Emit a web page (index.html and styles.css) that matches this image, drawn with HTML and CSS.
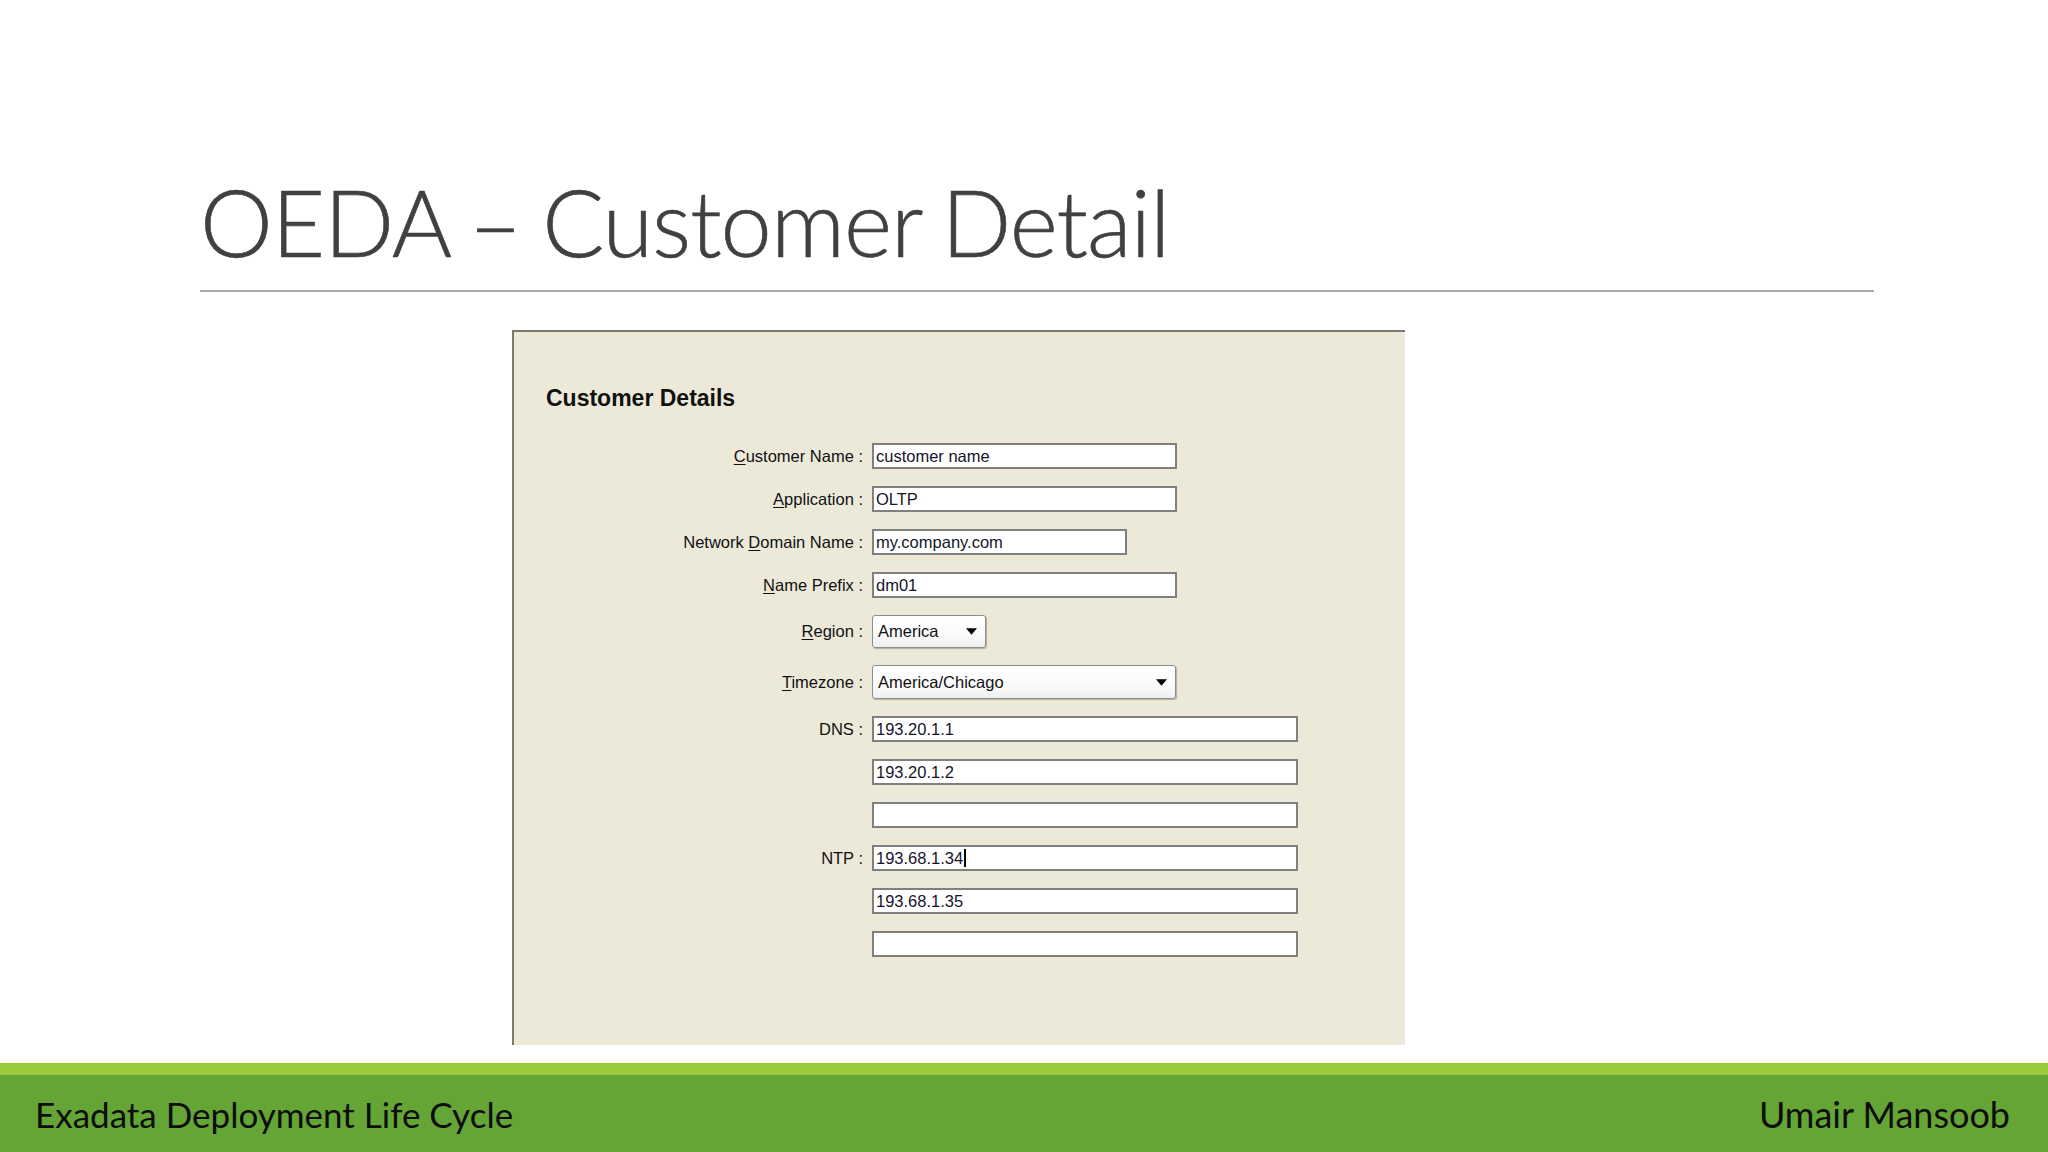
FILE: index.html
```html
<!DOCTYPE html>
<html lang="en">
<head>
<meta charset="utf-8">
<title>OEDA – Customer Detail</title>
<link rel="stylesheet" href="styles.css">
</head>
<body>
<div class="slide">
  <header class="head">
    <h1 class="title">OEDA – Customer Detail</h1>
  </header>
  <div class="rule"></div>
  <main class="content">
    <section class="panel">
      <h2 class="panel-title">Customer Details</h2>
      <div class="form">
        <label class="lbl"><u>C</u>ustomer Name :</label>
        <div class="field w305">customer name</div>

        <label class="lbl"><u>A</u>pplication :</label>
        <div class="field w305">OLTP</div>

        <label class="lbl">Network <u>D</u>omain Name :</label>
        <div class="field w255">my.company.com</div>

        <label class="lbl"><u>N</u>ame Prefix :</label>
        <div class="field w305">dm01</div>

        <label class="lbl"><u>R</u>egion :</label>
        <div class="combo w114"><span>America</span><svg class="arrow" viewBox="0 0 10 6" width="11" height="7"><path d="M0 0H10L5 6Z" fill="#000"/></svg></div>

        <label class="lbl"><u>T</u>imezone :</label>
        <div class="combo w304"><span>America/Chicago</span><svg class="arrow" viewBox="0 0 10 6" width="11" height="7"><path d="M0 0H10L5 6Z" fill="#000"/></svg></div>

        <label class="lbl">DNS :</label>
        <div class="field w426">193.20.1.1</div>

        <span class="lbl"></span>
        <div class="field w426">193.20.1.2</div>

        <span class="lbl"></span>
        <div class="field w426"></div>

        <label class="lbl">NTP :</label>
        <div class="field w426"><span class="caret">193.68.1.34</span></div>

        <span class="lbl"></span>
        <div class="field w426">193.68.1.35</div>

        <span class="lbl"></span>
        <div class="field w426"></div>
      </div>
    </section>
  </main>
  <footer class="footer">
    <span class="foot-text">Exadata Deployment Life Cycle</span>
    <span class="foot-text foot-right">Umair Mansoob</span>
  </footer>
</div>
</body>
</html>
```
FILE: styles.css
```css
html, body {
  margin: 0;
  padding: 0;
  background: #ffffff;
}

.slide {
  width: 2048px;
  height: 1152px;
  display: flex;
  flex-direction: column;
  overflow: hidden;
  background: #ffffff;
}

.head {
  padding: 176px 0 0 200px;
}

.title {
  margin: 0;
  font-family: Lato, "Open Sans", sans-serif;
  font-weight: 300;
  font-size: 92px;
  line-height: 92px;
  letter-spacing: -1px;
  word-spacing: -3px;
  color: #404040;
  white-space: nowrap;
  -webkit-text-stroke: 0.6px #404040;
}

.rule {
  margin: 22px 0 0 200px;
  width: 1674px;
  height: 2px;
  background: #a9a9a9;
}

.content {
  padding: 38px 0 0 512px;
}

.panel {
  box-sizing: border-box;
  width: 893px;
  height: 715px;
  background: #ece9d9;
  border-top: 2px solid #7b7b72;
  border-left: 2px solid #7b7b72;
  padding: 53px 0 0 32px;
}

.panel-title {
  margin: 0;
  font-family: "Liberation Sans", Arial, sans-serif;
  font-weight: bold;
  font-size: 23px;
  line-height: 26px;
  color: #111111;
}

.form {
  margin-top: 32px;
  display: grid;
  grid-template-columns: 317px auto;
  column-gap: 9px;
  row-gap: 17px;
  justify-content: start;
  align-items: center;
  font-family: "Liberation Sans", Arial, sans-serif;
  font-size: 16.5px;
  color: #111111;
}

.lbl {
  text-align: right;
  white-space: nowrap;
}

.lbl u {
  text-decoration-thickness: 1px;
  text-underline-offset: 2px;
}

.field {
  box-sizing: border-box;
  height: 26px;
  background: #ffffff;
  border: 2px solid #808080;
  padding: 0 2px;
  line-height: 22px;
  color: #15152a;
  white-space: nowrap;
}

.caret {
  border-right: 2px solid #000;
  padding-right: 1px;
}

.combo {
  box-sizing: border-box;
  height: 33px;
  background: linear-gradient(#ffffff, #fbfbfb 60%, #eeeeee);
  border: 1.5px solid #8d8d8d;
  border-radius: 3px;
  box-shadow: 1px 1px 1px rgba(0, 0, 0, 0.25);
  padding: 0 8px 0 5px;
  display: flex;
  align-items: center;
  justify-content: space-between;
  color: #111111;
  white-space: nowrap;
}

.w114 { width: 114px; }
.w255 { width: 255px; }
.w304 { width: 304px; height: 34px; }
.w305 { width: 305px; }
.w426 { width: 426px; }

.footer {
  margin-top: auto;
  box-sizing: border-box;
  height: 89px;
  border-top: 12px solid #9bcb3c;
  background: #64a535;
  display: flex;
  justify-content: space-between;
  align-items: center;
  padding: 0 38px 0 35px;
}

.foot-text {
  font-family: Lato, "Open Sans", sans-serif;
  font-size: 35px;
  color: #0d0d0d;
  white-space: nowrap;
}

.foot-right {
  font-size: 36px;
}
```
